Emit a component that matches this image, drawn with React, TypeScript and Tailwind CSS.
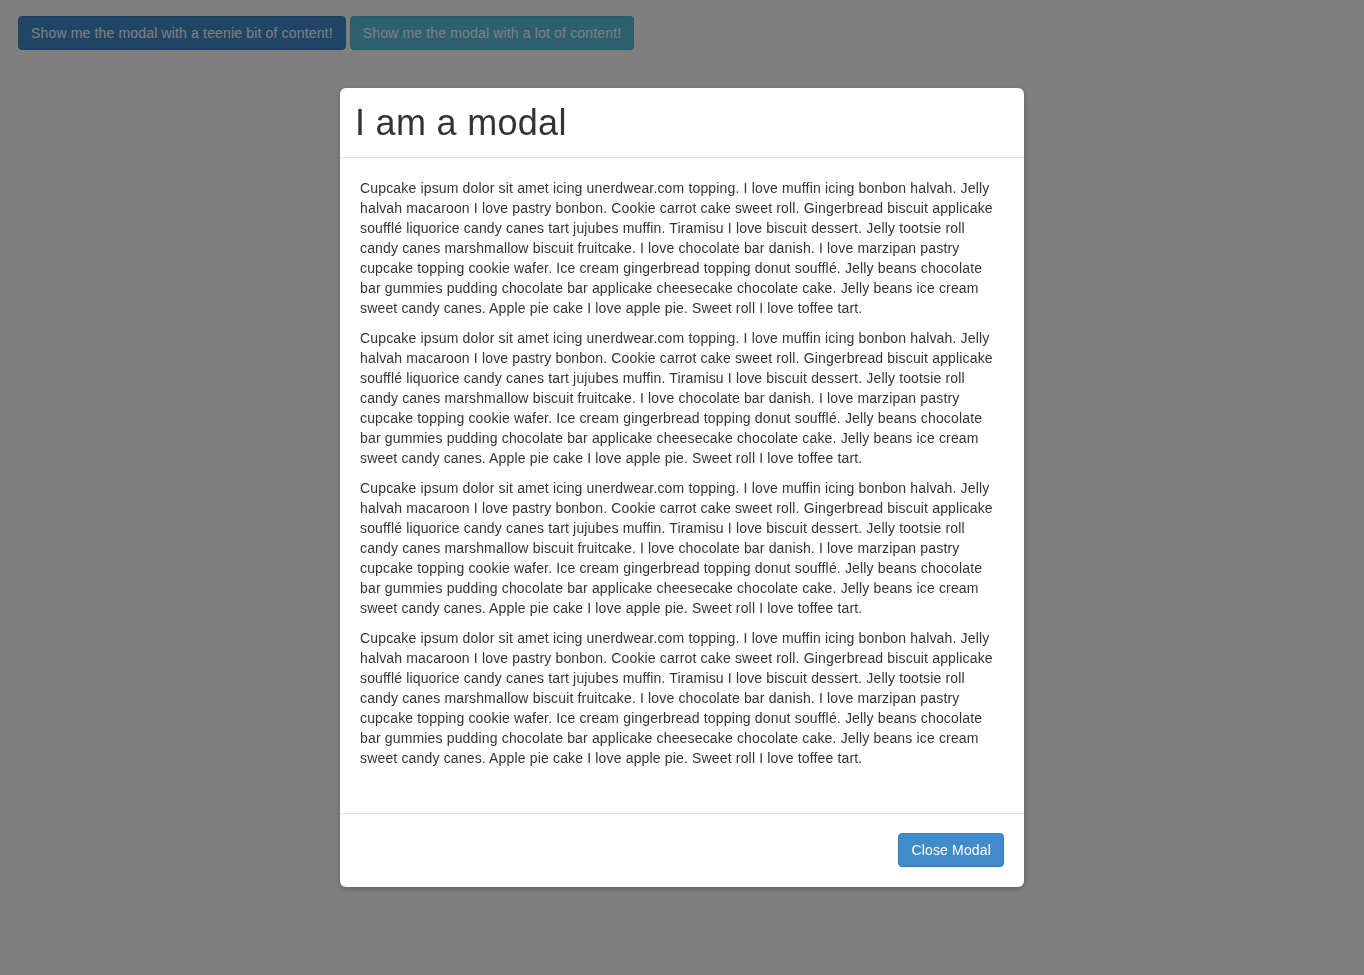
import React from 'react';

const PARA =
  'Cupcake ipsum dolor sit amet icing unerdwear.com topping. I love muffin icing bonbon halvah. Jelly halvah macaroon I love pastry bonbon. Cookie carrot cake sweet roll. Gingerbread biscuit applicake soufflé liquorice candy canes tart jujubes muffin. Tiramisu I love biscuit dessert. Jelly tootsie roll candy canes marshmallow biscuit fruitcake. I love chocolate bar danish. I love marzipan pastry cupcake topping cookie wafer. Ice cream gingerbread topping donut soufflé. Jelly beans chocolate bar gummies pudding chocolate bar applicake cheesecake chocolate cake. Jelly beans ice cream sweet candy canes. Apple pie cake I love apple pie. Sweet roll I love toffee tart.';

export default function App() {
  return (
    <div className="min-h-[975px] bg-white text-[14px] leading-[20px] tracking-[0.16px] text-[#333]" style={{ fontFamily: '"Liberation Sans", Arial, sans-serif' }}>
      <div className="flex gap-[4px] pl-[18px] pt-[16px]">
        <button className="h-[34px] rounded-[4px] border border-[#357ebd] bg-[#428bca] px-[12px] text-white">
          Show me the modal with a teenie bit of content!
        </button>
        <button className="h-[34px] rounded-[4px] border border-[#46b8da] bg-[#5bc0de] px-[12px] text-white">
          Show me the modal with a lot of content!
        </button>
      </div>

      <div className="fixed inset-0 overflow-y-auto bg-black/50">
        <div className="mx-auto mt-[88px] w-[684px] rounded-[6px] bg-white shadow-[0_2px_6px_rgba(0,0,0,0.25)]">
          <div className="border-b border-[#e5e5e5] p-[15px]">
            <h1 className="m-0 text-[36px] leading-[39px] font-normal tracking-[0.3px] text-[#333]">I am a modal</h1>
          </div>
          <div className="p-[20px]">
            {[0, 1, 2, 3].map(i => (
              <p key={i} className="mb-[10px]">{PARA}</p>
            ))}
          </div>
          <div className="mt-[15px] flex justify-end border-t border-[#e5e5e5] px-[20px] pt-[19px] pb-[20px]">
            <button className="h-[34px] rounded-[4px] border border-[#357ebd] bg-[#428bca] px-[12px] text-white">
              Close Modal
            </button>
          </div>
        </div>
      </div>
    </div>
  );
}
